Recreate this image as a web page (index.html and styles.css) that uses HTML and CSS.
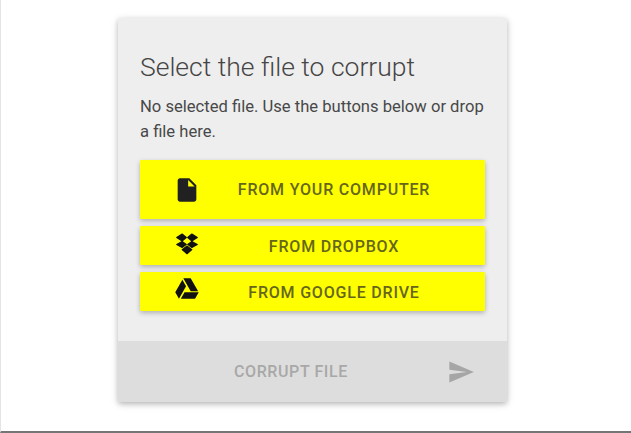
FILE: index.html
```html
<!DOCTYPE html>
<html lang="en">
<head>
<meta charset="utf-8">
<title>Corrupt a file</title>
<link rel="stylesheet" href="styles.css">
</head>
<body>
<div class="frame">
  <main class="card">
    <section class="content">
      <h1 class="title">Select the file to corrupt</h1>
      <p class="desc">No selected file. Use the buttons below or drop a file here.</p>
      <div class="actions">
        <button class="btn btn-tall" type="button">
          <span class="btn-icon"><svg width="28" height="28" viewBox="0 0 24 24"><path fill="#212121" d="M6 2c-1.100 0-2 .9-2 2v16c0 1.100.9 2 2 2h12c1.100 0 2-.9 2-2V8l-6-6H6zm7 7V3.500L18.500 9H13z"/></svg></span>
          <span class="btn-label">FROM YOUR COMPUTER</span>
        </button>
        <button class="btn btn-short" type="button">
          <span class="btn-icon icon-dropbox"><svg width="26" height="26" viewBox="0 0 24 24"><path fill="#111" stroke="#111" stroke-width="1" stroke-linejoin="round" d="M2.500 6 7.500 2.800 11.400 6 7.500 9.200zM12.600 6 16.500 2.800 21.500 6 16.500 9.200zM2.500 12.400 7.500 9.700 11.400 12.400 7.500 15.200zM21.500 12.400 16.500 15.200 12.600 12.400 16.500 9.700zM7.500 17.200 12 13.800 16.500 17.200 12 21z"/></svg></span>
          <span class="btn-label">FROM DROPBOX</span>
        </button>
        <button class="btn btn-short" type="button">
          <span class="btn-icon icon-drive"><svg width="26" height="26" viewBox="0 0 24 24"><path fill="#111" d="M7.710 3.500 1.150 15l3.430 6 6.550-11.500M9.730 15 6.300 21h13.120l3.430-6M22.280 14 15.420 2H8.580l6.850 12h6.850z"/></svg></span>
          <span class="btn-label">FROM GOOGLE DRIVE</span>
        </button>
      </div>
    </section>
    <footer class="footer">
      <span class="submit">CORRUPT FILE</span>
      <svg class="send" width="28" height="28" viewBox="0 0 24 24"><path fill="#a6a6a6" d="M2 21l21-9L2 3v7l15 2-15 2z"/></svg>
    </footer>
  </main>
</div>
</body>
</html>
```
FILE: styles.css
```css
* { box-sizing: border-box; }
html, body { margin: 0; height: 100%; }
body { background: #fff; font-family: Roboto, "Liberation Sans", sans-serif; overflow: hidden; }
.frame {
  width: 631px;
  height: 433px;
  border-left: 1px solid #e4e4e4;
  border-bottom: 2px solid #757575;
  padding: 18px 0 0 117px;
}
.card {
  width: 389px;
  height: 384px;
  background: #eeeeee;
  border-radius: 2px;
  overflow: hidden;
  box-shadow: 0 2px 5px rgba(0,0,0,.2), 0 2px 10px rgba(0,0,0,.12);
  display: flex;
  flex-direction: column;
}
.content { flex: 1; padding: 32px 22px 0; }
.title {
  margin: 0;
  font-size: 26.5px;
  font-weight: 300;
  line-height: 34px;
  color: #454545;
}
.desc {
  margin: 10px 0 0;
  font-size: 16.6px;
  line-height: 25px;
  color: #484848;
}
.actions { margin-top: 16px; display: flex; flex-direction: column; gap: 7px; }
.btn {
  height: 39px;
  width: 345px;
  padding: 0;
  border: 0;
  border-radius: 1px;
  background: #ffff00;
  box-shadow: 0 2px 5px rgba(0,0,0,.26);
  display: flex;
  align-items: center;
  font-family: inherit;
}
.btn-tall { height: 59px; }
.btn-short .btn-label { padding-top: 2px; }
.btn-icon { width: 93px; flex: none; display: flex; justify-content: center; }
.icon-dropbox { margin-top: -3px; }
.icon-drive { margin-top: -5px; }
.btn-label {
  width: 202px;
  flex: none;
  text-align: center;
  font-size: 16px;
  font-weight: 500;
  letter-spacing: .8px;
  color: #66661a;
}
.footer {
  height: 61px;
  flex: none;
  background: #dddddd;
  display: flex;
  align-items: center;
  padding: 0 32px 0 116px;
  justify-content: space-between;
}
.submit { font-size: 16px; font-weight: 500; letter-spacing: .6px; color: #a8a8a8; }
```
